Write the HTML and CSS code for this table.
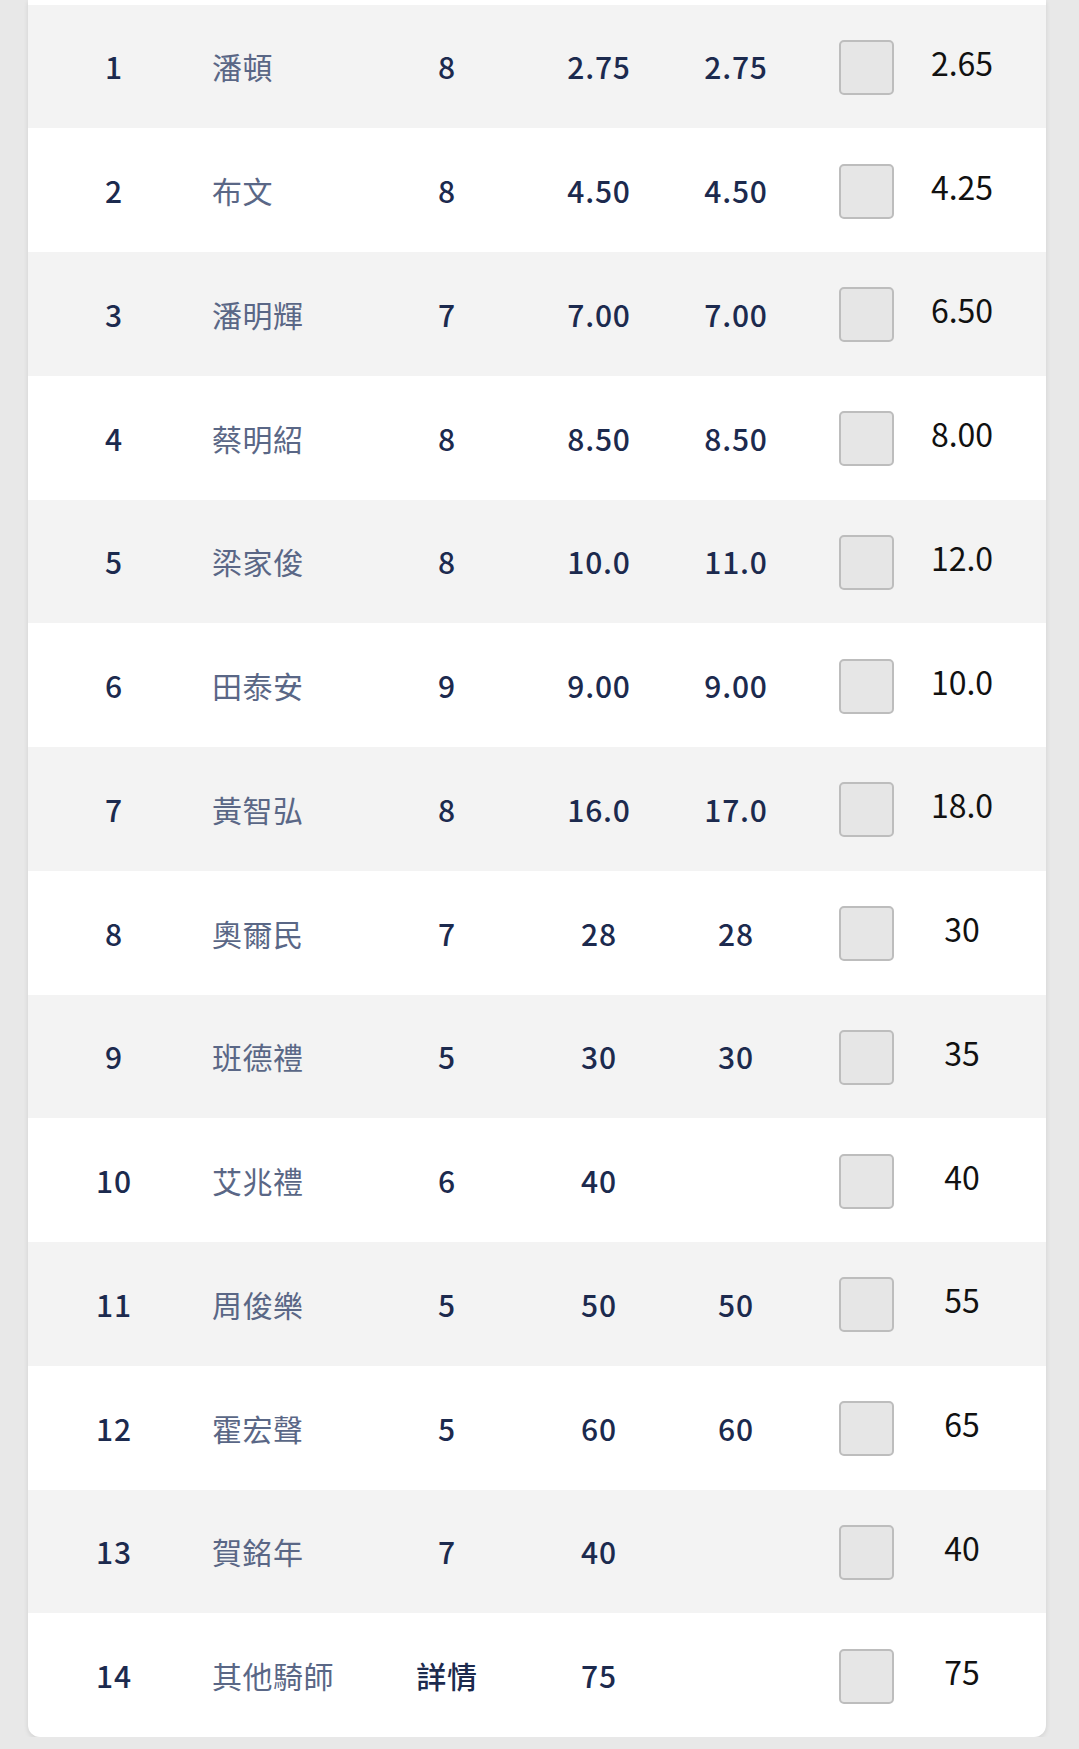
FILE: index.html
```html
<!DOCTYPE html>
<html lang="zh-Hant">
<head>
<meta charset="utf-8">
<title>騎師賠率</title>
<link rel="stylesheet" href="styles.css">
</head>
<body>
<div class="page">
  <div class="card">
    <div class="row alt"><div class="c no">1</div><div class="c name">潘頓</div><div class="c num">8</div><div class="c num">2.75</div><div class="c num">2.75</div><div class="c chk"><span class="box"></span></div><div class="c odds">2.65</div></div>
    <div class="row"><div class="c no">2</div><div class="c name">布文</div><div class="c num">8</div><div class="c num">4.50</div><div class="c num">4.50</div><div class="c chk"><span class="box"></span></div><div class="c odds">4.25</div></div>
    <div class="row alt"><div class="c no">3</div><div class="c name">潘明輝</div><div class="c num">7</div><div class="c num">7.00</div><div class="c num">7.00</div><div class="c chk"><span class="box"></span></div><div class="c odds">6.50</div></div>
    <div class="row"><div class="c no">4</div><div class="c name">蔡明紹</div><div class="c num">8</div><div class="c num">8.50</div><div class="c num">8.50</div><div class="c chk"><span class="box"></span></div><div class="c odds">8.00</div></div>
    <div class="row alt"><div class="c no">5</div><div class="c name">梁家俊</div><div class="c num">8</div><div class="c num">10.0</div><div class="c num">11.0</div><div class="c chk"><span class="box"></span></div><div class="c odds">12.0</div></div>
    <div class="row"><div class="c no">6</div><div class="c name">田泰安</div><div class="c num">9</div><div class="c num">9.00</div><div class="c num">9.00</div><div class="c chk"><span class="box"></span></div><div class="c odds">10.0</div></div>
    <div class="row alt"><div class="c no">7</div><div class="c name">黃智弘</div><div class="c num">8</div><div class="c num">16.0</div><div class="c num">17.0</div><div class="c chk"><span class="box"></span></div><div class="c odds">18.0</div></div>
    <div class="row"><div class="c no">8</div><div class="c name">奧爾民</div><div class="c num">7</div><div class="c num">28</div><div class="c num">28</div><div class="c chk"><span class="box"></span></div><div class="c odds">30</div></div>
    <div class="row alt"><div class="c no">9</div><div class="c name">班德禮</div><div class="c num">5</div><div class="c num">30</div><div class="c num">30</div><div class="c chk"><span class="box"></span></div><div class="c odds">35</div></div>
    <div class="row"><div class="c no">10</div><div class="c name">艾兆禮</div><div class="c num">6</div><div class="c num">40</div><div class="c num"></div><div class="c chk"><span class="box"></span></div><div class="c odds">40</div></div>
    <div class="row alt"><div class="c no">11</div><div class="c name">周俊樂</div><div class="c num">5</div><div class="c num">50</div><div class="c num">50</div><div class="c chk"><span class="box"></span></div><div class="c odds">55</div></div>
    <div class="row"><div class="c no">12</div><div class="c name">霍宏聲</div><div class="c num">5</div><div class="c num">60</div><div class="c num">60</div><div class="c chk"><span class="box"></span></div><div class="c odds">65</div></div>
    <div class="row alt"><div class="c no">13</div><div class="c name">賀銘年</div><div class="c num">7</div><div class="c num">40</div><div class="c num"></div><div class="c chk"><span class="box"></span></div><div class="c odds">40</div></div>
    <div class="row"><div class="c no">14</div><div class="c name">其他騎師</div><div class="c num">詳情</div><div class="c num">75</div><div class="c num"></div><div class="c chk"><span class="box"></span></div><div class="c odds">75</div></div>
  </div>
</div>
</body>
</html>
```

FILE: styles.css
```css
html, body {
  margin: 0;
  padding: 0;
  background: #e8e8e8;
}

body {
  font-family: "Noto Sans CJK TC", "Noto Sans", sans-serif;
  font-size: 30px;
  color: #1f2d50;
}

.page {
  padding: 0 33px 0 28px;
}

.card {
  background: #ffffff;
  padding-top: 4.5px;
  border-radius: 0 0 12px 12px;
  box-shadow: 0 2px 5px rgba(0, 0, 0, 0.10);
  overflow: hidden;
}

.row {
  display: grid;
  grid-template-columns: 172px 187px 120px 184px 90px 122px 118px 1fr;
  height: 123.75px;
  align-items: center;
}

.row.alt {
  background: #f3f3f3;
}

.c {
  text-align: center;
  white-space: nowrap;
  line-height: 1.4;
}

.no {
  color: #1c2a4e;
  font-weight: 500;
  letter-spacing: 0.8px;
}

.name {
  text-align: left;
  padding-left: 12px;
  color: #5a6786;
  letter-spacing: 0.5px;
}

.num {
  color: #1c2a4e;
  font-weight: 500;
  letter-spacing: 0.8px;
}

.chk {
  display: flex;
  justify-content: flex-start;
  padding-left: 58px;
  padding-top: 2px;
}

.box {
  display: block;
  box-sizing: border-box;
  width: 55px;
  height: 55px;
  background: #e6e6e6;
  border: 2px solid #bdbdbd;
  border-radius: 5px;
}

.odds {
  color: #111111;
  font-size: 32px;
  padding-bottom: 8px;
}
```
